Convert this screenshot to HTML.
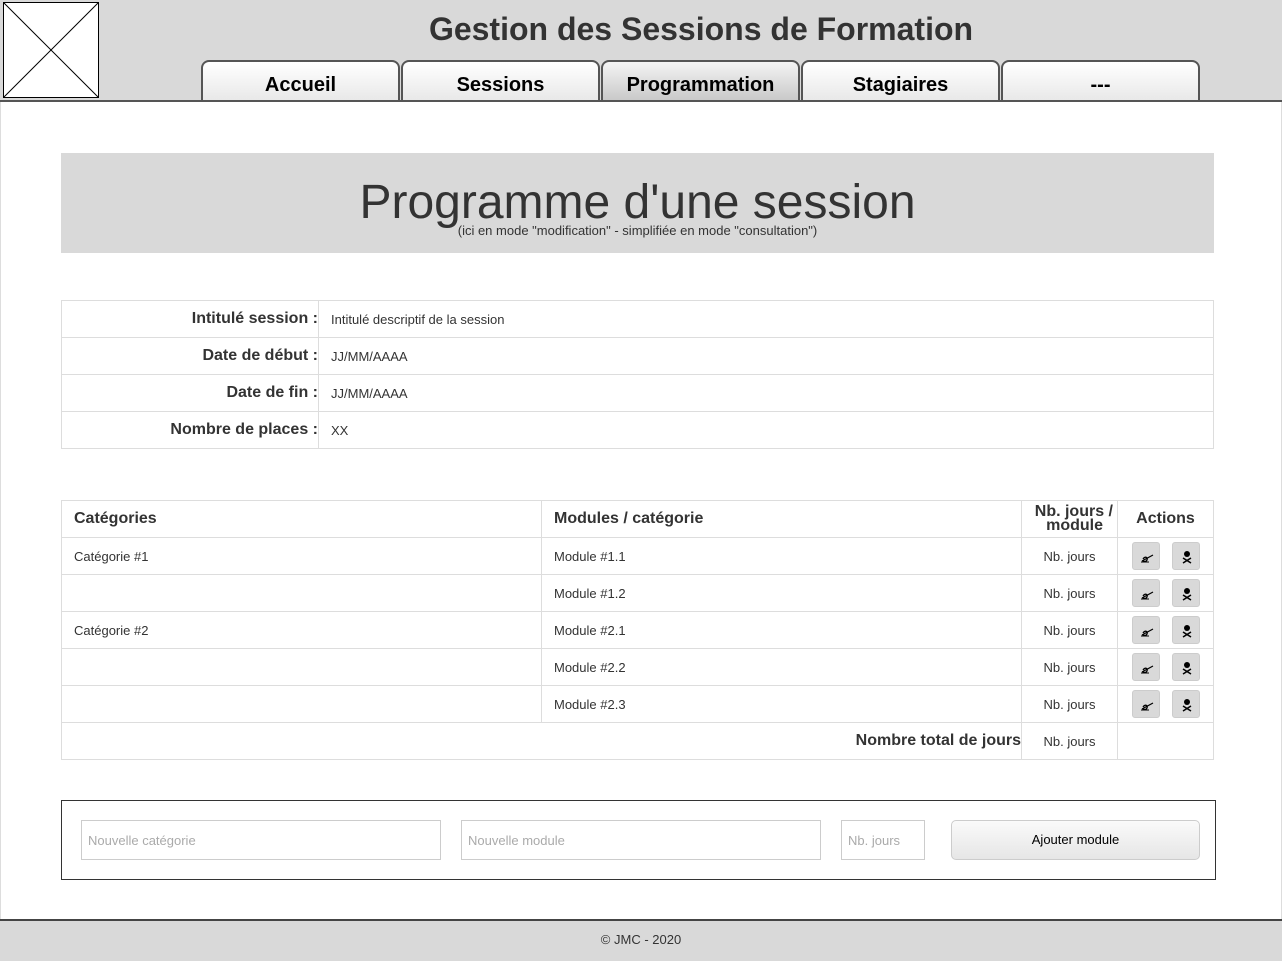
<!DOCTYPE html>
<html><head><meta charset="utf-8"><style>
*{box-sizing:border-box;margin:0;padding:0}
body{width:1282px;height:961px;position:relative;background:#fff;font-family:"Liberation Sans",sans-serif;overflow:hidden;color:#333}
.abs{position:absolute}
#hdr{left:0;top:0;width:1282px;height:100px;background:#d9d9d9}
#hline{left:0;top:100px;width:1282px;height:2px;background:#555}
#logo{left:3px;top:2px;width:96px;height:96px;background:#fff;border:1px solid #000}
h1{position:absolute;left:200px;width:1002px;top:11px;text-align:center;font-size:32px;font-weight:bold;color:#333}
.tab{position:absolute;top:60px;width:199px;height:41px;border:2px solid #555;border-bottom:none;border-radius:8px 8px 0 0;background:linear-gradient(#fff,#e8e8e8);text-align:center;font-weight:bold;font-size:20px;line-height:46px;color:#000}
.tab.act{background:linear-gradient(#f4f4f4,#c8c8c8)}
#title{left:61px;top:153px;width:1153px;height:100px;background:#d9d9d9;text-align:center}
#title .t{font-size:48px;color:#333;position:absolute;top:22px;width:100%}
#title .s{font-size:13px;color:#333;position:absolute;top:70px;width:100%}
table{position:absolute;border-collapse:collapse;font-size:13px}
td{border:1px solid #ddd;height:37px;padding:0 12px;vertical-align:middle}
.lab{text-align:right;font-weight:bold;font-size:16px;padding-right:0}
th{border:1px solid #ddd;height:37px;text-align:left;padding:0 12px;font-size:16px}
.btn{display:inline-block;width:28px;height:28px;background:#d9d9d9;border:1px solid #ccc;border-radius:3px;vertical-align:middle;margin:0 6px;position:relative}
.btn svg{position:absolute;left:7px;top:7px}
#form{left:61px;top:800px;width:1155px;height:80px;border:1px solid #333}
.inp{position:absolute;top:19px;height:40px;border:1px solid #ccc;font-size:13px;color:#aaa;padding:12px 6px}
#add{position:absolute;left:889px;top:19px;width:249px;height:40px;border:1px solid #ccc;border-radius:5px;background:linear-gradient(#fafafa,#e6e6e6);text-align:center;line-height:38px;font-size:13px;color:#000}
#fline{left:0;top:919px;width:1282px;height:2px;background:#444}
#foot{left:0;top:921px;width:1282px;height:40px;background:#d9d9d9;text-align:center;font-size:13px;line-height:38px;color:#333}
</style></head><body>
<div class="abs" id="hdr"></div>
<div class="abs" id="logo"><svg width="94" height="94"><line x1="0" y1="0" x2="94" y2="94" stroke="#000"/><line x1="94" y1="0" x2="0" y2="94" stroke="#000"/></svg></div>
<h1>Gestion des Sessions de Formation</h1>
<div class="tab" style="left:201px">Accueil</div>
<div class="tab" style="left:401px">Sessions</div>
<div class="tab act" style="left:601px">Programmation</div>
<div class="tab" style="left:801px">Stagiaires</div>
<div class="tab" style="left:1001px">---</div>
<div class="abs" id="hline"></div>
<div class="abs" style="left:0;top:102px;width:1px;height:818px;background:#ddd"></div>
<div class="abs" style="left:1281px;top:102px;width:1px;height:818px;background:#ddd"></div>
<div class="abs" id="title"><div class="t">Programme d'une session</div><div class="s">(ici en mode "modification" - simplifiée en mode "consultation")</div></div>
<table style="left:61px;top:300px;width:1153px">
<tr><td class="lab" style="width:257px">Intitulé session :</td><td>Intitulé descriptif de la session</td></tr>
<tr><td class="lab">Date de début :</td><td>JJ/MM/AAAA</td></tr>
<tr><td class="lab">Date de fin :</td><td>JJ/MM/AAAA</td></tr>
<tr><td class="lab">Nombre de places :</td><td>XX</td></tr>
</table>
<svg width="0" height="0" style="position:absolute"><defs>
<g id="pen"><path d="M2 11 L13 5" stroke="#000" stroke-width="1.2"/><path d="M3 9 C5 6 8 7 7 10 C6 12 3 12 3 10" stroke="#000" fill="none" stroke-width="1.3"/><path d="M1 12 H9" stroke="#000"/></g>
<g id="skull"><circle cx="7" cy="4" r="3" fill="#000"/><path d="M3 8 L11 13 M11 8 L3 13" stroke="#000" stroke-width="1.5"/></g>
</defs></svg>
<table style="left:61px;top:500px;width:1153px">
<tr><th style="width:480px">Catégories</th><th style="width:480px">Modules / catégorie</th><th style="width:96px;text-align:right;padding:0 4px;line-height:14px">Nb. jours /<br><span style="padding-right:10px">module</span></th><th style="text-align:center">Actions</th></tr>
<tr><td>Catégorie #1</td><td>Module #1.1</td><td style="text-align:center">Nb. jours</td><td style="text-align:center;padding:0"><span class="btn"><svg width="14" height="14"><use href="#pen"/></svg></span><span class="btn"><svg width="14" height="14"><use href="#skull"/></svg></span></td></tr>
<tr><td></td><td>Module #1.2</td><td style="text-align:center">Nb. jours</td><td style="text-align:center;padding:0"><span class="btn"><svg width="14" height="14"><use href="#pen"/></svg></span><span class="btn"><svg width="14" height="14"><use href="#skull"/></svg></span></td></tr>
<tr><td>Catégorie #2</td><td>Module #2.1</td><td style="text-align:center">Nb. jours</td><td style="text-align:center;padding:0"><span class="btn"><svg width="14" height="14"><use href="#pen"/></svg></span><span class="btn"><svg width="14" height="14"><use href="#skull"/></svg></span></td></tr>
<tr><td></td><td>Module #2.2</td><td style="text-align:center">Nb. jours</td><td style="text-align:center;padding:0"><span class="btn"><svg width="14" height="14"><use href="#pen"/></svg></span><span class="btn"><svg width="14" height="14"><use href="#skull"/></svg></span></td></tr>
<tr><td></td><td>Module #2.3</td><td style="text-align:center">Nb. jours</td><td style="text-align:center;padding:0"><span class="btn"><svg width="14" height="14"><use href="#pen"/></svg></span><span class="btn"><svg width="14" height="14"><use href="#skull"/></svg></span></td></tr>
<tr><td colspan="2" class="lab" style="padding-right:0">Nombre total de jours</td><td style="text-align:center">Nb. jours</td><td></td></tr>
</table>
<div class="abs" id="form">
<div class="inp" style="left:19px;width:360px">Nouvelle catégorie</div>
<div class="inp" style="left:399px;width:360px">Nouvelle module</div>
<div class="inp" style="left:779px;width:84px">Nb. jours</div>
<div id="add">Ajouter module</div>
</div>
<div class="abs" id="fline"></div>
<div class="abs" id="foot">© JMC - 2020</div>
</body></html>
